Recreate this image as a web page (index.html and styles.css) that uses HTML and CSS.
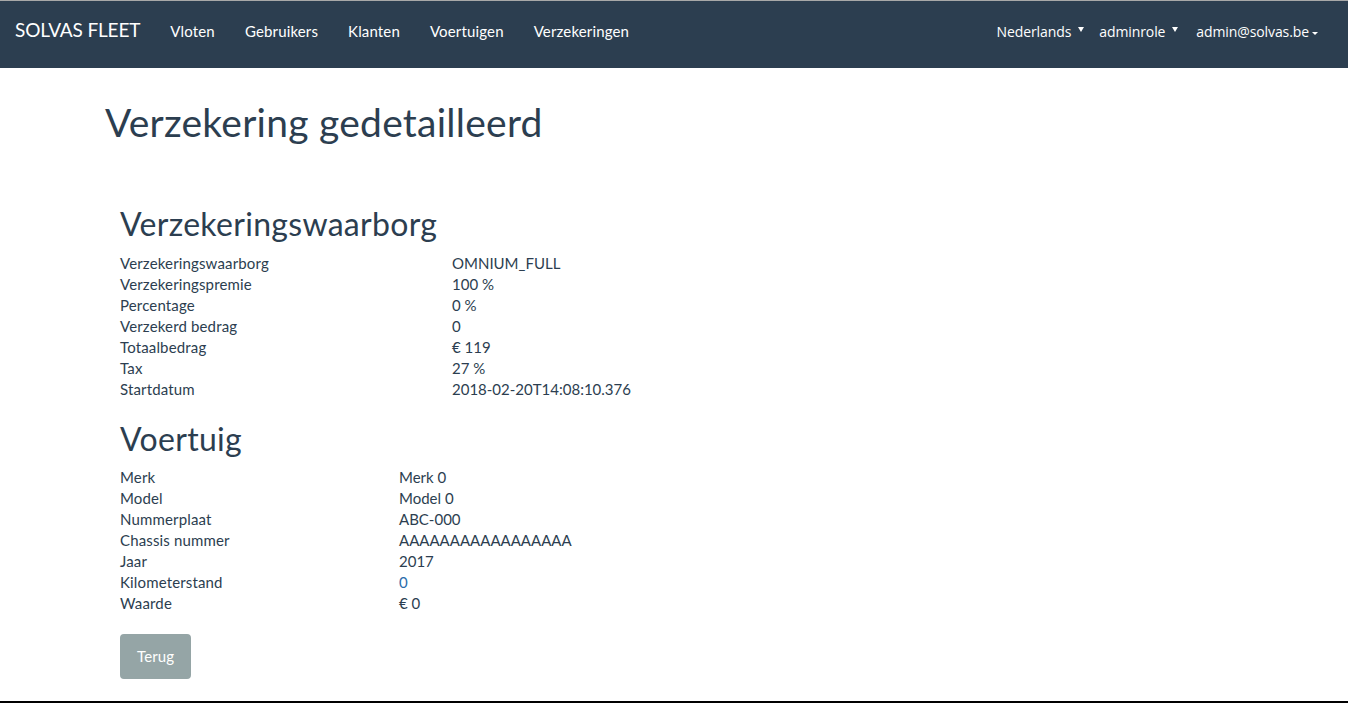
FILE: index.html
```html
<!DOCTYPE html>
<html lang="nl">
<head>
<meta charset="utf-8">
<title>Verzekering gedetailleerd</title>
<link rel="stylesheet" href="styles.css">
</head>
<body>
<div class="page">
  <nav class="navbar">
    <div class="nav-left">
      <a class="brand" href="#">SOLVAS FLEET</a>
      <a class="nav-link" href="#">Vloten</a>
      <a class="nav-link" href="#">Gebruikers</a>
      <a class="nav-link" href="#">Klanten</a>
      <a class="nav-link" href="#">Voertuigen</a>
      <a class="nav-link" href="#">Verzekeringen</a>
    </div>
    <div class="nav-right">
      <span class="nav-select lang">Nederlands<span class="tri"></span></span>
      <span class="nav-select role">adminrole<span class="tri"></span></span>
      <span class="nav-user">admin@solvas.be<span class="caret"></span></span>
    </div>
  </nav>

  <main class="container">
    <h1 class="page-title">Verzekering gedetailleerd</h1>

    <section class="section">
      <h2 class="section-title">Verzekeringswaarborg</h2>
      <div class="details details-wide">
        <div class="label">Verzekeringswaarborg</div><div class="value">OMNIUM_FULL</div>
        <div class="label">Verzekeringspremie</div><div class="value">100 %</div>
        <div class="label">Percentage</div><div class="value">0 %</div>
        <div class="label">Verzekerd bedrag</div><div class="value">0</div>
        <div class="label">Totaalbedrag</div><div class="value">€ 119</div>
        <div class="label">Tax</div><div class="value">27 %</div>
        <div class="label">Startdatum</div><div class="value">2018-02-20T14:08:10.376</div>
      </div>
    </section>

    <section class="section">
      <h2 class="section-title">Voertuig</h2>
      <div class="details details-narrow">
        <div class="label">Merk</div><div class="value">Merk 0</div>
        <div class="label">Model</div><div class="value">Model 0</div>
        <div class="label">Nummerplaat</div><div class="value">ABC-000</div>
        <div class="label">Chassis nummer</div><div class="value">AAAAAAAAAAAAAAAAA</div>
        <div class="label">Jaar</div><div class="value">2017</div>
        <div class="label">Kilometerstand</div><div class="value link">0</div>
        <div class="label">Waarde</div><div class="value">€ 0</div>
      </div>
      <button class="btn" type="button">Terug</button>
    </section>
  </main>

  <div class="bottom-line"></div>
</div>
</body>
</html>
```

FILE: styles.css
```css
* { box-sizing: border-box; }

html, body {
  margin: 0;
  padding: 0;
}

body {
  font-family: Lato, "Open Sans", sans-serif;
  font-size: 15px;
  line-height: 21px;
  letter-spacing: 0.15px;
  color: #2c3e50;
  background: #ffffff;
}

.page {
  min-height: 100vh;
  display: flex;
  flex-direction: column;
}

/* Navbar */
.navbar {
  height: 68px;
  border-top: 1px solid #a8a8a8;
  background: #2c3e50;
  display: flex;
  justify-content: space-between;
  align-items: flex-start;
  padding: 0 15px;
}

.nav-left {
  display: flex;
  align-items: flex-start;
}

.brand {
  font-size: 19px;
  line-height: 21px;
  padding: 18px 15px 21px 0;
  color: #ffffff;
  text-decoration: none;
  letter-spacing: -0.15px;
}

.nav-link {
  font-size: 15px;
  line-height: 21px;
  padding: 19.5px 15px;
  color: #ffffff;
  text-decoration: none;
}

.nav-right {
  display: flex;
  align-items: flex-start;
  font-family: "Open Sans", "Liberation Sans", sans-serif;
  font-size: 14px;
  line-height: 21px;
  letter-spacing: -0.1px;
  color: #ffffff;
  padding-right: 15px;
}

.nav-select,
.nav-user {
  display: flex;
  align-items: flex-start;
  padding-top: 20px;
}

.role { margin-left: 15px; }
.nav-user { margin-left: 18px; }

.tri {
  width: 0;
  height: 0;
  margin: 6px 0 0 7px;
  border-left: 3px solid transparent;
  border-right: 3px solid transparent;
  border-top: 5px solid #ffffff;
}

.caret {
  width: 0;
  height: 0;
  margin: 11px 0 0 3px;
  border-left: 3.5px solid transparent;
  border-right: 3.5px solid transparent;
  border-top: 3.5px solid #ffffff;
}

/* Content */
.container {
  flex: 1;
  width: 1170px;
  margin: 0 auto;
  padding: 0 14px 0 16px;
}

.page-title {
  font-size: 39px;
  font-weight: 400;
  line-height: 1.1;
  letter-spacing: 0.25px;
  margin: 33px 0 62.6px;
  color: #2c3e50;
}

.section {
  padding-left: 15px;
}

.section-title {
  font-size: 32px;
  font-weight: 400;
  line-height: 1.1;
  letter-spacing: 0.3px;
  margin: 21px 0 11px;
  color: #2c3e50;
}

.section:first-of-type .section-title {
  margin-top: 0;
}

.details {
  display: grid;
}

.details-wide { grid-template-columns: 332px auto; }
.details-narrow { grid-template-columns: 279px auto; }

.label,
.value {
  line-height: 21px;
}

.value {
  letter-spacing: 0;
}

.value.link {
  color: #2b6cab;
}

.btn {
  margin-top: 20px;
  font-family: Lato, sans-serif;
  font-size: 15px;
  line-height: 21px;
  letter-spacing: 0.15px;
  padding: 10px 15px;
  color: #ffffff;
  background: #95a5a6;
  border: 2px solid #95a5a6;
  border-radius: 4px;
  cursor: pointer;
}

.bottom-line {
  height: 2px;
  background: #000000;
}
```
